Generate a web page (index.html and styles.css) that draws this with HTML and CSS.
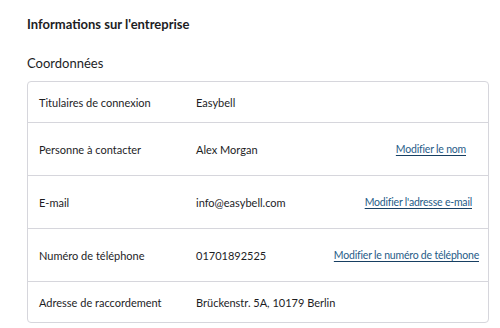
FILE: index.html
```html
<!DOCTYPE html>
<html lang="fr">
<head>
    <meta charset="UTF-8">
    <meta name="viewport" content="width=device-width, initial-scale=1.0">
    <title>Informations sur l'entreprise</title>
    <link rel="stylesheet" href="styles.css">
</head>
<body>
    <div class="page">
        <h1 class="title">Informations sur l'entreprise</h1>
        <h2 class="subtitle">Coordonnées</h2>
        <div class="card">
            <div class="row row-short">
                <span class="label">Titulaires de connexion</span>
                <span class="value">Easybell</span>
            </div>
            <div class="row">
                <span class="label">Personne à contacter</span>
                <span class="value">Alex Morgan</span>
                <a href="#" class="action action-name">Modifier le nom</a>
            </div>
            <div class="row">
                <span class="label">E-mail</span>
                <span class="value">info@easybell.com</span>
                <a href="#" class="action">Modifier l'adresse e-mail</a>
            </div>
            <div class="row">
                <span class="label">Numéro de téléphone</span>
                <span class="value">01701892525</span>
                <a href="#" class="action action-phone">Modifier le numéro de téléphone</a>
            </div>
            <div class="row row-short">
                <span class="label">Adresse de raccordement</span>
                <span class="value">Brückenstr. 5A, 10179 Berlin</span>
            </div>
        </div>
    </div>
</body>
</html>
```

FILE: styles.css
```css
body {
    margin: 0;
    padding: 0;
    background-color: #fff;
    font-family: Lato, "Open Sans", sans-serif;
    color: #1d1d1f;
}
.page {
    padding: 14px 11px 0 27px;
}
.title {
    font-size: 13px;
    font-weight: 700;
    margin: 0 0 20px;
    line-height: 20px;
}
.subtitle {
    font-size: 13px;
    font-weight: 400;
    margin: 0 0 9px;
    line-height: 18px;
}
.card {
    border: 1px solid #d6d6dc;
    border-radius: 4px;
}
.row {
    display: flex;
    align-items: center;
    height: 52px;
    padding: 0 16px 0 11px;
    border-bottom: 1px solid #d6d6dc;
    font-size: 11px;
}
.row:last-child {
    border-bottom: 0;
}
.row-short {
    height: 40px;
}
.label {
    width: 157px;
    flex-shrink: 0;
}
.value {
    flex: 1;
}
.action {
    font-size: 10.5px;
    letter-spacing: -0.2px;
    color: #1f5c88;
    text-decoration: underline;
    text-decoration-color: #173f62;
    text-decoration-thickness: 1px;
    text-underline-offset: 2px;
}
.action-name {
    margin-right: 6px;
}
.action-phone {
    margin-right: -7px;
}
```
